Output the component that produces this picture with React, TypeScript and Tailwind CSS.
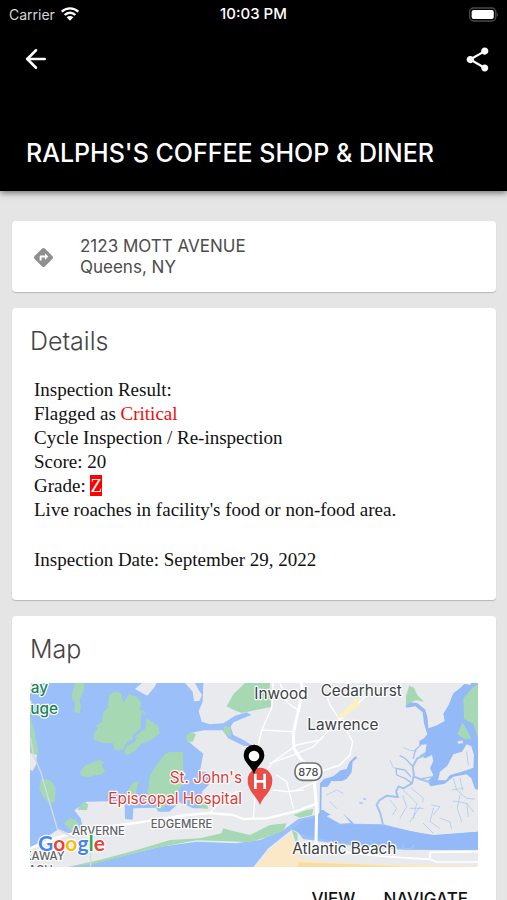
import { ArrowLeft } from "lucide-react";
import { MdDirections, MdShare } from "react-icons/md";

const inspection = {
  name: "RALPHS'S COFFEE SHOP & DINER",
  street: "2123 MOTT AVENUE",
  city: "Queens, NY",
  flag: "Critical",
  type: "Cycle Inspection / Re-inspection",
  score: 20,
  grade: "Z",
  violation: "Live roaches in facility's food or non-food area.",
  date: "September 29, 2022",
};

const StatusBar = () => (
  <div className="grid grid-cols-3 items-center h-7 px-2 text-[14px]">
    <div className="flex items-center gap-[6px] pl-px text-[#d5d5d5]">
      <span>Carrier</span>
      <svg viewBox="0 0 54 42" className="w-[18px] h-[14px]" fill="none" stroke="#fff" strokeWidth="7">
        <path d="M2 14C16 .5 38 .5 52 14" />
        <path d="M11 24C20 15 34 15 43 24" />
        <path d="M27 41L17 31C23 26 31 26 37 31Z" fill="#fff" stroke="none" />
      </svg>
    </div>
    <span className="text-center text-[15px] font-medium whitespace-nowrap">10:03 PM</span>
    <svg viewBox="0 0 92 44" className="w-[30px] h-[15px] justify-self-end">
      <rect x="2" y="2" width="80" height="40" rx="12" fill="none" stroke="#4a4a4a" strokeWidth="4" />
      <rect x="8" y="8" width="68" height="28" rx="6" fill="#fff" />
      <path d="M85 15Q92 22 85 29Z" fill="#4a4a4a" />
    </svg>
  </div>
);

const Header = () => (
  <header className="relative z-10 shrink-0 bg-black text-white shadow-[0_2px_6px_rgba(0,0,0,0.5)]">
    <StatusBar />
    <div className="flex items-center justify-between h-[62px] pl-[21px] pr-[15px]">
      <button aria-label="Back">
        <ArrowLeft size={30} strokeWidth={2} />
      </button>
      <button aria-label="Share">
        <MdShare size={29} />
      </button>
    </div>
    <h1 className="px-[26px] pt-[47px] pb-[22px] text-[25px] leading-8 font-medium">
      {inspection.name}
    </h1>
  </header>
);

const MapView = () => (
  <svg
    viewBox="30 24 1344 552"
    className="block w-full"
    fontFamily="Inter, sans-serif"
    role="img"
    aria-label="Map of Far Rockaway"
  >
    <rect x="30" y="24" width="1344" height="552" fill="#9bbff9" />

    {/* marsh islands */}
    <g fill="#a5d8b3">
      <path d="M165 24L190 24L192 45L178 75L183 95L178 117L163 110L166 84L154 66Z" />
      <path d="M268 60L282 50L303 54L310 84L325 58L352 66L364 84L358 105L372 108L380 130L414 152L420 175L392 196L362 208L348 225L322 240L312 236L318 215L345 200L350 186L322 200L308 224L285 225L280 205L250 205L222 194L220 178L233 160L228 152L246 140L250 110L263 100Z" />
      <path d="M365 108L380 125L376 160L350 180L342 190L335 185L362 158Z" fill="#9bbff9" />
      <path d="M180 292L197 270L220 262L238 254L252 262L244 272L256 288L246 298L228 300L208 307L185 304Z" />
      <path d="M30 125L42 160L55 235L42 280L30 285Z" />
      <path d="M62 312L90 315L107 340L105 378L90 386L70 366L58 342Z" />
      <path d="M132 445L148 430L168 434L178 452L160 475Z" />
      <path d="M390 300L410 270L435 236L452 230L490 232L488 330L450 380L410 385L380 360L386 330Z" />
      <path d="M320 350L340 322L356 320L348 350L340 385L320 378Z" />
    </g>

    {/* land */}
    <g fill="#e8eaed">
      <path d="M366 24H410L402 38L382 62L345 42Z" />
      <path d="M495 24H525L532 38L546 60L538 78L522 79L518 50Z" />
      <path d="M550 24L548 80L536 108L545 140L570 148L610 145L645 122L680 112L694 120L640 142L632 155L640 180L672 196L700 214L670 212L625 190L608 166L552 166L510 174L500 194L524 215L550 236L540 288L568 295L566 330L545 350L560 400L520 400L478 382L448 410L415 410L408 398L340 400L338 434L315 432L314 378L200 380L163 406L182 430L190 464L145 475L116 462L76 490L30 520V576H145L300 545L420 515L530 500L650 505L720 495L790 465L835 432L888 420L902 445L945 448L1002 446L1090 448L1170 468L1240 482L1374 470V24Z" />
      <path d="M30 235L50 240L48 270L38 288L30 284Z" />
      <path d="M700 576L745 520L815 464L832 470L850 492L930 503L1020 515L1160 525L1374 524V576Z" />
    </g>

    {/* shoreline parks */}
    <g fill="#a5d8b3">
      <path d="M145 576L250 552L350 525L450 495L540 490L604 475L610 460L630 466L690 480L750 450L800 445L790 468L740 486L690 502L610 498L530 496L400 520L300 546L210 570Z" />
      <path d="M172 404L190 380L205 388L200 406Z" />
      <path d="M640 58L675 24H750L754 96L704 106L665 114L640 104L620 94Z" />
      <path d="M610 152L630 156L634 186L612 174Z" />
      <path d="M498 182L512 170L528 178L518 200L500 200Z" />
      <path d="M450 232H482L488 310L478 345H450Z" />
      <path d="M410 350L425 340L430 358L445 370L430 400L408 402Z" />
      <path d="M528 365L560 362L564 402L540 398Z" />
      <path d="M815 464L832 475L834 520L825 495Z" />
      <path d="M820 420L860 405L880 402L876 420L840 428Z" />
    </g>

    {/* beach */}
    <path d="M705 576L750 522L812 474L826 518L838 550L910 560L1030 566L1374 572V576Z" fill="#fae8c7" />
    <path d="M835 576V562L1000 568L1170 576Z" fill="#f9dd9c" />

    {/* eastern bays and creeks */}
    <g fill="#93baf7">
      <path d="M1336 24L1320 40L1300 55L1286 90L1270 116L1274 138L1248 152L1225 160L1222 125L1216 104L1192 84L1170 82L1156 92L1160 98L1186 94L1208 112L1212 145L1222 178L1212 190L1198 198L1198 210L1220 208L1216 232L1198 242L1216 250L1236 240L1240 258L1230 280L1240 300L1222 320L1232 334L1274 326L1300 305L1340 298L1354 310L1365 342L1374 344V24Z" />
      <path d="M900 325L912 312L940 304L962 286L980 282L988 262L1006 244L1012 248L998 260L995 292L980 312L960 320L934 318L918 345L913 408L930 418H972L998 442L1002 446L898 448Z" />
      <path d="M900 412L945 448L1080 450L1180 470L1240 480L1374 470V524L1240 524L1150 518L1030 512L890 488L840 476L820 462L850 436L885 430Z" />
    </g>
    <g fill="#e8eaed">
      <path d="M920 424L940 414L970 416L992 444L960 446Z" />
      <path d="M1254 316L1260 290L1282 272L1300 238L1326 230L1340 208L1354 214L1362 240L1360 278L1344 284L1320 292L1290 300L1278 316Z" />
      <path d="M1312 200L1326 196L1330 204L1315 206Z" />
      <path d="M905 336L930 335L948 318H970L965 340L925 350L916 405H904Z" />
    </g>
    <g fill="#a5d8b3">
      <path d="M1158 62L1168 32L1182 38L1192 60L1212 80L1188 76L1172 82L1158 92Z" />
      <path d="M1358 38L1374 28V190L1360 146L1332 132L1330 70Z" />
      <path d="M1328 142L1354 190L1338 194L1312 178Z" />
    </g>
    <g fill="none" stroke="#a4c2f3" strokeLinejoin="round" strokeLinecap="round">
      <path strokeWidth="6" d="M1215 240L1192 250L1178 275L1182 300L1176 325L1150 340L1136 334L1128 350L1134 366L1100 362L1078 376L1070 390L1080 412L1088 445M1182 305L1200 312L1230 322" />
      <path strokeWidth="4" d="M1178 274L1155 250L1140 242M1180 250L1186 225L1202 210M1176 325L1155 310L1130 300L1128 280L1155 285L1172 305M1200 312L1240 305" />
      <path
        strokeWidth="2"
        d="M1110 256L1120 278L1140 282M1150 218L1170 226L1190 228M1148 362L1160 395L1140 430M1175 340L1210 370L1208 382M1150 345L1190 385L1180 430M1200 395L1170 440M1170 400L1210 400M1235 390L1260 395L1240 420M1240 400L1230 440L1260 460M1210 445L1240 475M1300 310L1310 345L1340 370L1364 372M1296 345L1330 340M1328 345L1320 310M1320 360L1312 400L1325 440M1300 378L1340 385L1360 410M1340 385L1345 425M1260 430L1290 440L1294 460M1110 375L1130 400L1118 420M920 360L950 345L970 355M930 380L950 400M1340 230L1345 270"
      />
      <path strokeWidth="5" d="M1020 384H1026M1032 372H1036" />
      <path strokeWidth="6" d="M1148 510L1152 522L1172 522L1180 512" />
    </g>

    {/* roads */}
    <g fill="none" stroke="#fff" strokeLinejoin="round" strokeLinecap="round">
      <path strokeWidth="9" d="M845 24L846 60L832 120L820 175L822 220L840 250L880 290L890 400L888 505" />
      <path strokeWidth="7" d="M340 445L500 420L570 414L640 420L670 432L740 430L830 408L890 386M30 520L120 485L240 458L345 444" />
      <path strokeWidth="4" d="M760 24L755 100L725 165L715 210M725 165L818 170M720 310L760 260L830 210L900 195L940 150L1000 100L1060 40M750 265L820 240L880 215L960 130M570 414L600 380L650 350M700 430L708 330M770 300L800 320L820 400M830 345L890 320L900 290L960 270L990 240L998 200L970 150L930 90L920 60M780 24L800 80L840 110M850 345L800 350L760 345" />
      <path strokeWidth="5" d="M870 520L1100 545L1230 553V532L1374 530M1230 553L1250 561H1374" />
      <path strokeWidth="4" d="M32 190L40 240L62 290L85 370L112 462L160 488M212 490V576" stroke="#d4dbe5" />
    </g>
    <path d="M948 128L1000 82L1025 88L1000 106L974 125Z M994 90L1005 70L1025 72Z M1325 24H1352V30Z" fill="#fdf0c0" />

    {/* place labels */}
    <g stroke="#fff" strokeWidth="7" strokeLinejoin="round" paintOrder="stroke">
      <g fill="#3c4043" fontSize="46">
        <text x="703" y="73">Inwood</text>
        <text x="902" y="62">Cedarhurst</text>
        <text x="862" y="164">Lawrence</text>
        <text x="817" y="538">Atlantic Beach</text>
      </g>
      <g fill="#188252" fontSize="46" fontWeight="500">
        <text x="84" y="55" textAnchor="end">Bay</text>
        <text x="114" y="117" textAnchor="end">Refuge</text>
      </g>
      <g fill="#d93c37" fontSize="46" textAnchor="end">
        <text x="666" y="323">St. John's</text>
        <text x="666" y="386">Episcopal Hospital</text>
      </g>
      <g fill="#5f6368" fontSize="34" fontWeight="500">
        <text x="156" y="479">ARVERNE</text>
        <text x="392" y="458">EDGEMERE</text>
        <text x="134" y="555" textAnchor="end">ROCKAWAY</text>
        <text x="98" y="597" textAnchor="end">BEACH</text>
      </g>
    </g>

    <rect x="825" y="264" width="80" height="52" rx="23" fill="#fff" stroke="#6f7378" strokeWidth="5" />
    <text x="865" y="302" textAnchor="middle" fontSize="33" fontWeight="500" fill="#4b4f54">
      878
    </text>

    {/* hospital pin */}
    <path d="M720 391C714 366 683 352 683 316A37 38 0 0 1 757 316C757 352 726 366 720 391Z" fill="#e94f48" />
    <path d="M706 296V342M734 296V342M706 319H734" stroke="#fff" strokeWidth="8" />

    {/* selected place */}
    <path d="M702 298C694 272 671 263 671 240A31 31 0 0 1 733 240C733 263 710 272 702 298Z" fill="#000" />
    <circle cx="702" cy="243" r="16" fill="#fff" />

    <text
      x="54"
      y="529"
      fontSize="63"
      fontFamily="Lato, sans-serif"
      fontWeight="700"
      stroke="#fff"
      strokeWidth="7"
      paintOrder="stroke"
    >
      <tspan fill="#4285f4">G</tspan>
      <tspan fill="#ea4335">o</tspan>
      <tspan fill="#fbbc05">o</tspan>
      <tspan fill="#4285f4">g</tspan>
      <tspan fill="#34a853">l</tspan>
      <tspan fill="#ea4335">e</tspan>
    </text>
  </svg>
);

export default function App() {
  return (
    <div className="flex flex-col h-screen bg-[#e5e5e5] font-[Inter,sans-serif]">
      <Header />

      <main className="flex flex-col gap-4 flex-1 min-h-0 overflow-y-auto [scrollbar-width:none] pl-3 pr-[11px] pt-[30px] pb-4">
        <section className="shrink-0 flex items-center gap-[25px] rounded-[4px] bg-white px-5 pt-[15px] pb-[14px] shadow-[0_1px_1px_rgba(0,0,0,0.2)]">
          <MdDirections size={23} className="text-[#8e8f8f]" />
          <address className="not-italic text-[17px] leading-[21px] text-[#4c4c4c]">
            {inspection.street}
            <br />
            {inspection.city}
          </address>
        </section>

        <section className="shrink-0 rounded-[4px] bg-white px-[18px] pt-[17px] pb-[28px] shadow-[0_1px_1px_rgba(0,0,0,0.2)]">
          <h2 className="text-[25px] leading-8 font-light text-[#444]">Details</h2>
          <div className="pl-1 pt-[21px] font-['Liberation_Serif',serif] text-[19px] leading-6 text-[#111]">
            <p>Inspection Result:</p>
            <p>
              Flagged as <span className="text-[#f20d0d]">{inspection.flag}</span>
            </p>
            <p>{inspection.type}</p>
            <p>Score: {inspection.score}</p>
            <p>
              Grade: <span className="bg-[#f00] text-white">{inspection.grade}</span>
            </p>
            <p>{inspection.violation}</p>
            <p className="pt-[26px]">Inspection Date: {inspection.date}</p>
          </div>
        </section>

        <section className="shrink-0 rounded-[4px] bg-white px-[18px] pt-[17px] pb-3 shadow-[0_1px_1px_rgba(0,0,0,0.2)]">
          <h2 className="text-[25px] leading-8 font-light text-[#444]">Map</h2>
          <div className="pt-[18px]">
            <MapView />
          </div>
          <div className="flex justify-end gap-7 pt-5 pr-[10px] text-[17px] leading-6 font-medium text-[#111]">
            <button>VIEW</button>
            <button>NAVIGATE</button>
          </div>
        </section>
      </main>
    </div>
  );
}
